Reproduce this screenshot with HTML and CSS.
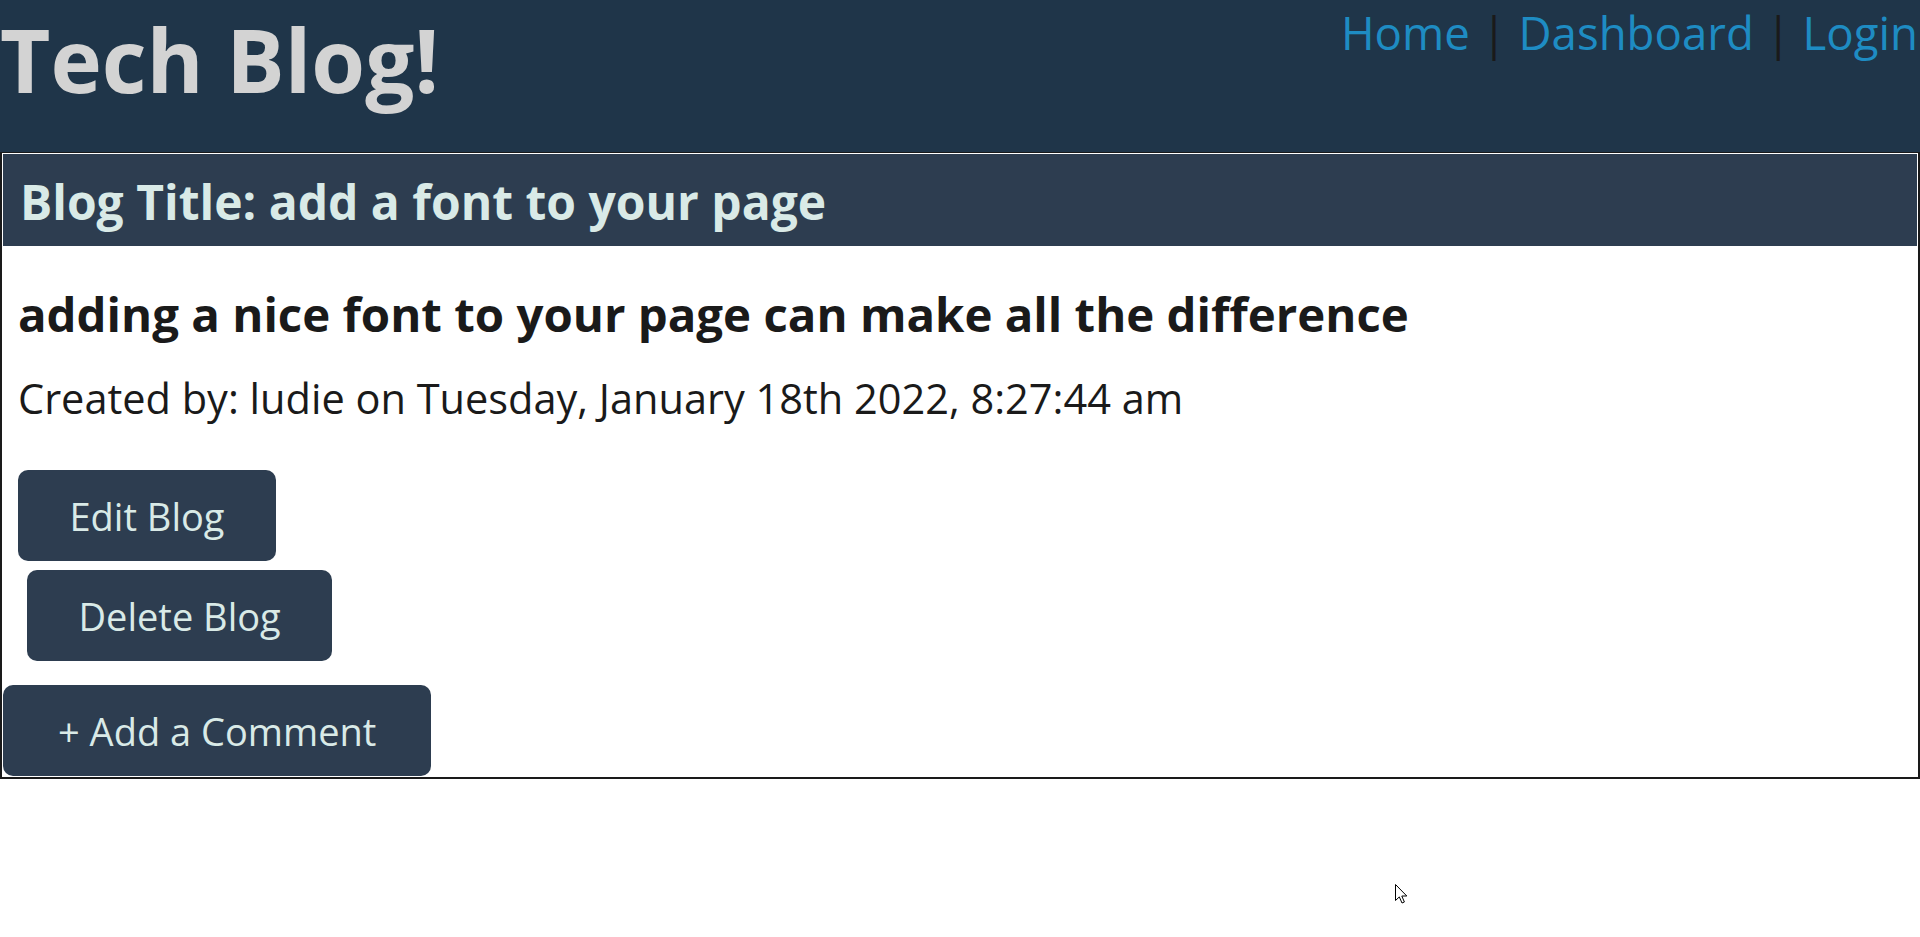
FILE: index.html
```html
<!DOCTYPE html>
<html lang="en">
<head>
<meta charset="utf-8">
<title>Tech Blog!</title>
<link rel="stylesheet" href="styles.css">
</head>
<body>
<header class="site-header">
  <h1 class="brand">Tech Blog!</h1>
  <nav class="nav">
    <a class="nav-link" href="#">Home</a><span class="sep"> | </span><a class="nav-link" href="#">Dashboard</a><span class="sep"> | </span><a class="nav-link" href="#">Login</a>
  </nav>
</header>
<main class="card">
  <div class="card-title">Blog Title: add a font to your page</div>
  <div class="card-body">
    <h2 class="post-text">adding a nice font to your page can make all the difference</h2>
    <p class="post-meta">Created by: ludie on Tuesday, January 18th 2022, 8:27:44 am</p>
    <button class="btn btn-edit">Edit Blog</button>
    <button class="btn btn-delete">Delete Blog</button>
  </div>
  <button class="btn btn-comment">+ Add a Comment</button>
</main>
<svg class="cursor" width="13" height="20" viewBox="0 0 13 20" aria-hidden="true">
  <path d="M0.5 0.5 L0.5 16.5 L4.3 12.9 L7 19 L9.4 18 L6.8 12 L11.8 12 Z" fill="#fff" stroke="#000" stroke-width="1" stroke-linejoin="miter"/>
</svg>
</body>
</html>
```
FILE: styles.css
```css
* { box-sizing: border-box; }

body {
  margin: 0;
  background: #ffffff;
  font-family: "Open Sans", "Noto Sans", sans-serif;
  color: #1a1a1a;
}

.site-header {
  height: 152px;
  background: #1f3549;
  display: flex;
  justify-content: space-between;
  align-items: flex-start;
}

.brand {
  margin: 9px 0 0 0;
  font-size: 87px;
  line-height: 100px;
  font-weight: 700;
  color: #d3d3d3;
  letter-spacing: 0;
}

.nav {
  margin-top: 2px;
  padding-right: 2px;
  font-size: 45.6px;
  line-height: 60px;
  font-weight: 400;
  color: #1a1a1a;
  white-space: nowrap;
}

.nav-link {
  color: #1e8cc3;
  text-decoration: none;
}

.sep {
  color: #1a1a1a;
}

.card {
  display: flex;
  flex-direction: column;
  align-items: flex-start;
  border: 2px solid #1a1a1a;
  border-top-width: 1px;
  padding: 1px;
  height: 627px;
}

.card-title {
  align-self: stretch;
  height: 92px;
  padding: 16px 17px 0;
  background: #2d3d50;
  color: #d9eae7;
  font-size: 48px;
  line-height: 64px;
  font-weight: 700;
}

.card-body {
  display: flex;
  flex-direction: column;
  align-items: flex-start;
  padding: 0 15px;
}

.post-text {
  margin: 38px 0 0;
  font-size: 47.4px;
  line-height: 60px;
  font-weight: 700;
  color: #1a1a1a;
}

.post-meta {
  margin: 26px 0 0;
  font-size: 41.5px;
  line-height: 56px;
  font-weight: 400;
  color: #1a1a1a;
}

.btn {
  height: 91px;
  padding: 2px 51.5px 0;
  border: none;
  border-radius: 10px;
  background: #2d3d50;
  color: #d9eae7;
  font-family: "Open Sans", "Noto Sans", sans-serif;
  font-size: 38px;
  line-height: 89px;
  font-weight: 400;
  white-space: nowrap;
}

.btn-edit {
  margin-top: 44px;
}

.btn-delete {
  margin-top: 9px;
  margin-left: 9px;
}

.btn-comment {
  margin-top: 24px;
  padding-left: 55px;
  padding-right: 55px;
}

.cursor {
  position: absolute;
  left: 1395px;
  top: 884px;
}
```
